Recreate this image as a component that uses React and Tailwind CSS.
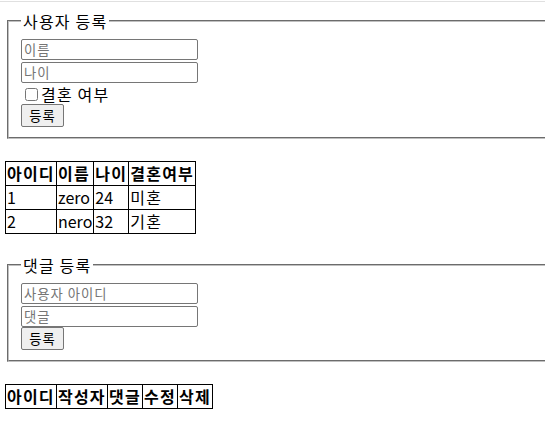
import React from 'react';

const users = [
  { id: '1', name: 'zero', age: '24', married: '미혼' },
  { id: '2', name: 'nero', age: '32', married: '기혼' },
];

// 기본 브라우저 폼 느낌을 살린 입력창
const Field = ({ placeholder, className = '' }) => (
  <input
    placeholder={placeholder}
    className={
      'block w-[177px] h-[21px] border border-[#767676] rounded-[2px] px-[2px] text-[13.33px] tracking-[1px] bg-white placeholder:text-[#757575] ' +
      className
    }
  />
);

const SubmitButton = () => (
  <button className="block w-[43px] h-[23px] bg-[#efefef] border border-[#767676] rounded-[2px] text-[13.33px] tracking-[1px] leading-none text-black">
    등록
  </button>
);

const Box = ({ title, children, className = '' }) => (
  <fieldset
    className={
      'ml-[2px] w-[620px] border-2 [--tw-border-style:groove] [border-style:groove] border-[#c0c0c0] px-3 pt-[7px] pb-[10px] ' +
      className
    }
  >
    <legend className="px-[2px] leading-[22px]">{title}</legend>
    {children}
  </fieldset>
);

const cell = 'border border-black px-px py-px leading-[21px] align-middle text-left';

const Head = ({ w, children }) => (
  <th className={cell + ' font-bold'}>
    <div className={w}>{children}</div>
  </th>
);

export default function App() {
  return (
    <div className="w-full min-h-screen overflow-hidden bg-white text-black text-[16px] tracking-[1.2px] font-['Noto_Sans_CJK_KR',sans-serif]">
      <div className="mt-px h-px bg-[#e0e0e0]" />

      <div className="px-[5px] pb-6">
        {/* 사용자 등록 */}
        <Box title="사용자 등록" className="mt-[8px]">
          <Field placeholder="이름" />
          <Field placeholder="나이" className="mt-[2px]" />
          <label className="flex items-center h-[21px]">
            <input type="checkbox" className="ml-[4px] mr-[3px] w-[13px] h-[13px] mt-px" />
            결혼 여부
          </label>
          <SubmitButton />
        </Box>

        <table className="mt-[22px] border-collapse">
          <thead>
            <tr>
              <Head w="w-[48px]">아이디</Head>
              <Head w="w-[33px]">이름</Head>
              <Head w="w-[32px]">나이</Head>
              <Head w="w-[64px]">결혼여부</Head>
            </tr>
          </thead>
          <tbody>
            {users.map((u) => (
              <tr key={u.id}>
                <td className={cell + ' tracking-normal'}>{u.id}</td>
                <td className={cell + ' tracking-normal'}>{u.name}</td>
                <td className={cell + ' tracking-normal'}>{u.age}</td>
                <td className={cell}>{u.married}</td>
              </tr>
            ))}
          </tbody>
        </table>

        {/* 댓글 등록 */}
        <Box title="댓글 등록" className="mt-[20px]">
          <Field placeholder="사용자 아이디" />
          <Field placeholder="댓글" className="mt-[2px]" />
          <SubmitButton />
        </Box>

        <table className="mt-[22px] border-collapse">
          <thead>
            <tr>
              <Head w="w-[48px]">아이디</Head>
              <Head w="w-[48px]">작성자</Head>
              <Head w="w-[32px]">댓글</Head>
              <Head w="w-[32px]">수정</Head>
              <Head w="w-[32px]">삭제</Head>
            </tr>
          </thead>
        </table>
      </div>
    </div>
  );
}
